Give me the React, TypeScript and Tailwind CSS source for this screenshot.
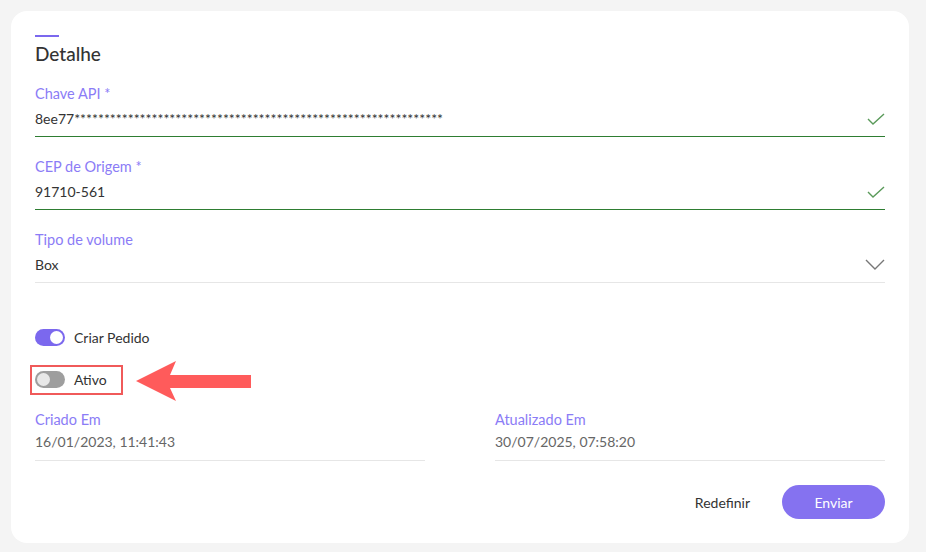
import React from "react";

const font = { fontFamily: "Lato, 'Noto Sans', sans-serif" };

function Check() {
  return (
    <svg width="18" height="12" viewBox="0 0 18 12" fill="none">
      <path d="M1 6 L6 11 L17 1" stroke="#5a9a5a" strokeWidth="1.4" />
    </svg>
  );
}

function Chevron() {
  return (
    <svg width="20" height="11" viewBox="0 0 20 11" fill="none">
      <path d="M1 1 L10 10 L19 1" stroke="#777" strokeWidth="1.4" />
    </svg>
  );
}

function Field({ label, value, ok, select }: { label: string; value: string; ok?: boolean; select?: boolean }) {
  return (
    <div className={"flex flex-col border-b " + (ok ? "border-[#2e7d32]" : "border-[#e6e6e6]")}>
      <div className="text-[14.5px] leading-[20px] text-[#8b7cf6]">{label}</div>
      <div className="flex items-start justify-between h-[32px] pt-[5px]">
        <span className="text-[14px] leading-[20px] text-[#333]">{value}</span>
        <div className="pt-[4px]">{ok ? <Check /> : select ? <Chevron /> : null}</div>
      </div>
    </div>
  );
}

function Toggle({ on }: { on: boolean }) {
  return (
    <div className={"relative w-[30px] h-[17px] rounded-full " + (on ? "bg-[#7b68ee]" : "bg-[#9e9e9e]")}>
      <div
        className={
          "absolute top-[2px] w-[13px] h-[13px] rounded-full " +
          (on ? "left-[15px] bg-white" : "left-[2px] bg-[#e8e8e8]")
        }
      />
    </div>
  );
}

export default function App() {
  const stars = "*".repeat(62);
  return (
    <div style={font} className="w-[926px] h-[552px] bg-[#f4f4f4] p-[11px]">
      <div className="w-[898px] h-[532px] bg-white rounded-[16px] px-[24px] pt-[24px] flex flex-col">
        <div className="w-[24px] h-[2px] bg-[#7b68ee]" />
        <div className="mt-[5px] text-[19px] leading-[24px] text-[#333] font-medium">Detalhe</div>
        <div className="mt-[18px] flex flex-col gap-[20px]">
          <Field label="Chave API *" value={"8ee77" + stars} ok />
          <Field label="CEP de Origem *" value="91710-561" ok />
          <Field label="Tipo de volume" value="Box" select />
        </div>
        <div className="mt-[44px] flex items-center gap-[9px]">
          <Toggle on />
          <span className="text-[14px] text-[#333]">Criar Pedido</span>
        </div>
        <div className="relative mt-[21px] flex items-center gap-[9px]">
          <Toggle on={false} />
          <span className="text-[14px] text-[#333]">Ativo</span>
          <div className="absolute left-[-5px] top-[-4px] w-[93px] h-[30px] border-2 border-[#f05a5a]" />
          <svg className="absolute left-[101px] top-[-8px]" width="116" height="41" viewBox="0 0 116 41">
            <polygon points="0,20 40,0 34,14 115,14 115,27 34,27 40,40" fill="#ff5b5b" />
          </svg>
        </div>
        <div className="mt-[20px] grid grid-cols-2 gap-x-[70px]">
          <div className="flex flex-col border-b border-[#e6e6e6] pb-[6px]">
            <span className="text-[14.5px] leading-[20px] text-[#8b7cf6]">Criado Em</span>
            <span className="text-[14px] leading-[24px] text-[#666]">16/01/2023, 11:41:43</span>
          </div>
          <div className="flex flex-col border-b border-[#e6e6e6] pb-[6px]">
            <span className="text-[14.5px] leading-[20px] text-[#8b7cf6]">Atualizado Em</span>
            <span className="text-[14px] leading-[24px] text-[#666]">30/07/2025, 07:58:20</span>
          </div>
        </div>
        <div className="mt-[24px] flex justify-end items-center gap-[32px]">
          <span className="text-[14px] text-[#333]">Redefinir</span>
          <button className="w-[103px] h-[34px] rounded-full bg-[#8572f0] text-white text-[14px]">Enviar</button>
        </div>
      </div>
    </div>
  );
}
